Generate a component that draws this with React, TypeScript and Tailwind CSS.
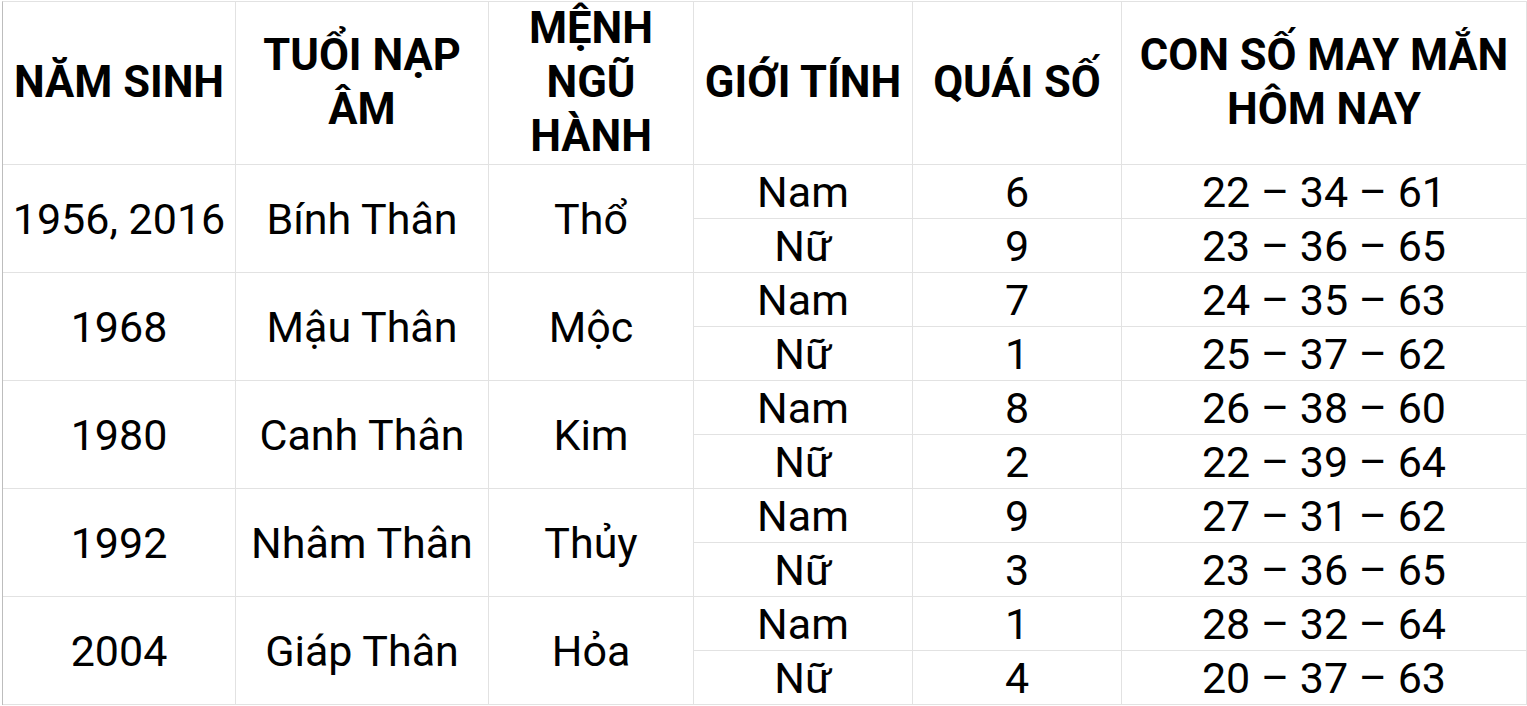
import React from 'react';

type Group = {
  year: string;
  tuoi: string;
  menh: string;
  rows: { gender: string; quai: string; lucky: string }[];
};

const groups: Group[] = [
  {
    year: '1956, 2016',
    tuoi: 'Bính Thân',
    menh: 'Thổ',
    rows: [
      { gender: 'Nam', quai: '6', lucky: '22 – 34 – 61' },
      { gender: 'Nữ', quai: '9', lucky: '23 – 36 – 65' },
    ],
  },
  {
    year: '1968',
    tuoi: 'Mậu Thân',
    menh: 'Mộc',
    rows: [
      { gender: 'Nam', quai: '7', lucky: '24 – 35 – 63' },
      { gender: 'Nữ', quai: '1', lucky: '25 – 37 – 62' },
    ],
  },
  {
    year: '1980',
    tuoi: 'Canh Thân',
    menh: 'Kim',
    rows: [
      { gender: 'Nam', quai: '8', lucky: '26 – 38 – 60' },
      { gender: 'Nữ', quai: '2', lucky: '22 – 39 – 64' },
    ],
  },
  {
    year: '1992',
    tuoi: 'Nhâm Thân',
    menh: 'Thủy',
    rows: [
      { gender: 'Nam', quai: '9', lucky: '27 – 31 – 62' },
      { gender: 'Nữ', quai: '3', lucky: '23 – 36 – 65' },
    ],
  },
  {
    year: '2004',
    tuoi: 'Giáp Thân',
    menh: 'Hỏa',
    rows: [
      { gender: 'Nam', quai: '1', lucky: '28 – 32 – 64' },
      { gender: 'Nữ', quai: '4', lucky: '20 – 37 – 63' },
    ],
  },
];

const headers = ['NĂM SINH', 'TUỔI NẠP\nÂM', 'MỆNH\nNGŨ\nHÀNH', 'GIỚI TÍNH', 'QUÁI SỐ', 'CON SỐ MAY MẮN\nHÔM NAY'];

const cell = 'flex items-center justify-center text-center border-r border-b border-[#e2e2e2] whitespace-nowrap';

export default function App() {
  return (
    <div className="w-[1527px] h-[706px] bg-white overflow-hidden pt-[1px] text-black" style={{ fontFamily: 'Roboto, "Liberation Sans", sans-serif' }}>
      <div className="ml-[2px] grid grid-cols-[233px_253px_205px_219px_209px_405px] grid-rows-[163px_repeat(10,54px)] border-t border-l border-t-[#e2e2e2] border-l-[#bdbdbd] text-[43px] leading-[54px]">
        {/* Header */}
        {headers.map((h) => (
          <div key={h} className={`${cell} font-bold whitespace-pre-line text-[43.5px]`}>
            {h}
          </div>
        ))}

        {/* Body */}
        {groups.map((g) => (
          <React.Fragment key={g.year}>
            <div className={`${cell} row-span-2`}>{g.year}</div>
            <div className={`${cell} row-span-2`}>{g.tuoi}</div>
            <div className={`${cell} row-span-2`}>{g.menh}</div>
            <div className={cell}>{g.rows[0].gender}</div>
            <div className={cell}>{g.rows[0].quai}</div>
            <div className={cell}>{g.rows[0].lucky}</div>
            <div className={`${cell} col-start-4`}>{g.rows[1].gender}</div>
            <div className={cell}>{g.rows[1].quai}</div>
            <div className={cell}>{g.rows[1].lucky}</div>
          </React.Fragment>
        ))}
      </div>
    </div>
  );
}
